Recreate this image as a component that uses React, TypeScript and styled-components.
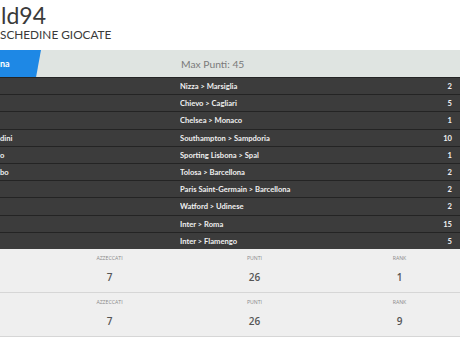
import React from "react";
import styled, { createGlobalStyle } from "styled-components";

const GlobalStyle = createGlobalStyle`
  html, body {
    margin: 0;
    padding: 0;
    background: #ffffff;
    overflow: hidden;
  }
  body {
    font-family: Lato, "Open Sans", "Liberation Sans", sans-serif;
  }
`;

const Page = styled.div`
  width: 460px;
  padding-top: 4px;
`;

const Title = styled.h1`
  margin: 0;
  padding-left: 1px;
  font-size: 23px;
  line-height: 22px;
  font-weight: 400;
  color: #3a3a3a;
`;

const Subtitle = styled.div`
  margin-top: 2px;
  font-size: 11.8px;
  line-height: 14px;
  color: #3a3a3a;
`;

const HeaderBar = styled.div`
  margin-top: 8px;
  height: 27px;
  display: flex;
  align-items: center;
  background: #dfe4e1;
`;

const Tab = styled.div`
  width: 41px;
  height: 100%;
  display: flex;
  align-items: center;
  background: #1e88e5;
  color: #ffffff;
  font-size: 9px;
  font-weight: 700;
  clip-path: polygon(0 0, 100% 0, 88% 100%, 0 100%);
`;

const MaxPoints = styled.div`
  margin-left: 140px;
  font-size: 10.3px;
  color: #7a7a7a;
`;

const Table = styled.div`
  background: #3c3c3c;
`;

const Row = styled.div`
  display: grid;
  grid-template-columns: 180px 1fr 40px;
  align-items: center;
  height: 17.2px;
  box-sizing: border-box;
  border-top: 1px solid #242424;
  color: #f0f0f0;
  font-size: 7.6px;
  font-weight: 700;
`;

const Cell = styled.div<{ $right?: boolean }>`
  white-space: nowrap;
  overflow: hidden;
  text-align: ${(p) => (p.$right ? "right" : "left")};
  padding-right: ${(p) => (p.$right ? "8px" : "0")};
`;

const StatsBlock = styled.div`
  display: grid;
  grid-template-columns: repeat(3, 145px);
  padding-left: 37px;
  height: 44px;
  box-sizing: border-box;
  background: #efefef;
  border-bottom: 1px solid #d6d6d6;
`;

const Stat = styled.div`
  display: flex;
  flex-direction: column;
  align-items: center;
  padding-top: 6px;
`;

const StatLabel = styled.div`
  font-size: 5.2px;
  line-height: 6px;
  color: #8a8a8a;
  font-family: "Open Sans", Lato, sans-serif;
`;

const StatValue = styled.div`
  margin-top: 9px;
  font-size: 10px;
  font-weight: 600;
  color: #555555;
  font-family: "Open Sans", Lato, sans-serif;
`;

const rows = [
  ["", "Nizza > Marsiglia", "2"],
  ["", "Chievo > Cagliari", "5"],
  ["", "Chelsea > Monaco", "1"],
  ["dini", "Southampton > Sampdoria", "10"],
  ["o", "Sporting Lisbona > Spal", "1"],
  ["bo", "Tolosa > Barcellona", "2"],
  ["", "Paris Saint-Germain > Barcellona", "2"],
  ["", "Watford > Udinese", "2"],
  ["", "Inter > Roma", "15"],
  ["", "Inter > Flamengo", "5"],
];

const stats = [
  { azzeccati: 7, punti: 26, rank: 1 },
  { azzeccati: 7, punti: 26, rank: 9 },
];

export default function App() {
  return (
    <Page>
      <GlobalStyle />
      <Title>ld94</Title>
      <Subtitle>SCHEDINE GIOCATE</Subtitle>
      <HeaderBar>
        <Tab>na</Tab>
        <MaxPoints>Max Punti: 45</MaxPoints>
      </HeaderBar>
      <Table>
        {rows.map(([player, match, pts], i) => (
          <Row key={i}>
            <Cell>{player}</Cell>
            <Cell>{match}</Cell>
            <Cell $right>{pts}</Cell>
          </Row>
        ))}
      </Table>
      {stats.map((s, i) => (
        <StatsBlock key={i}>
          <Stat>
            <StatLabel>AZZECCATI</StatLabel>
            <StatValue>{s.azzeccati}</StatValue>
          </Stat>
          <Stat>
            <StatLabel>PUNTI</StatLabel>
            <StatValue>{s.punti}</StatValue>
          </Stat>
          <Stat>
            <StatLabel>RANK</StatLabel>
            <StatValue>{s.rank}</StatValue>
          </Stat>
        </StatsBlock>
      ))}
    </Page>
  );
}
